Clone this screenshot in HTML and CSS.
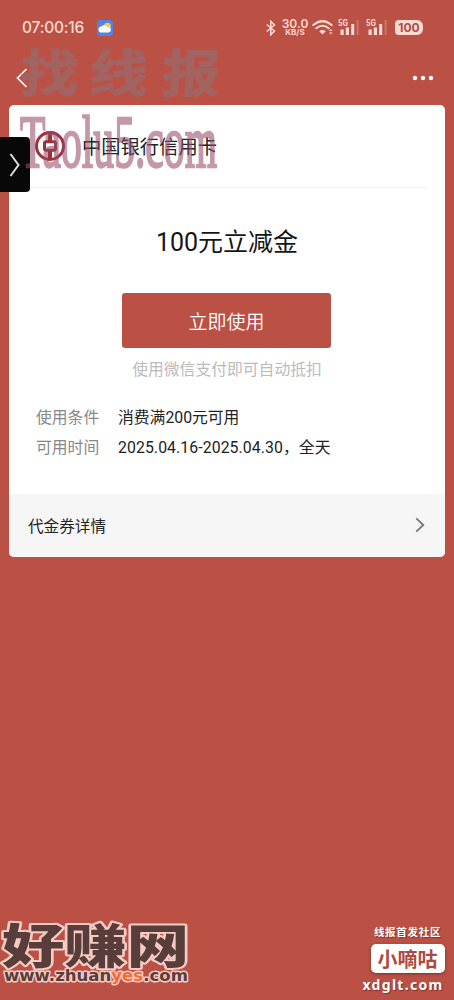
FILE: index.html
```html
<!DOCTYPE html>
<html lang="zh-CN">
<head>
<meta charset="UTF-8">
<meta name="viewport" content="width=device-width, initial-scale=1">
<title>100元立减金</title>
<link rel="stylesheet" href="styles.css">
</head>
<body>
<div class="screen">
  <header class="status">
    <span class="clock">07:00:16</span>
    <svg class="weather" width="16" height="16" viewBox="0 0 16 16"><rect width="16" height="16" rx="3.5" fill="#4f83e4"/><circle cx="10.5" cy="6" r="3.3" fill="#f6c469"/><path d="M4.7 12.5a3 3 0 0 1-.4-6 3.4 3.4 0 0 1 5.8.6 2.8 2.8 0 1 1 .9 5.4z" fill="#fff"/></svg>
    <div class="indicators">
      <svg width="10" height="16" viewBox="0 0 10 16" fill="none" stroke="#fcd9d1" stroke-width="1.6"><path d="M.8 4.5 8.4 11 4.8 14.7V1.3L8.4 5 .8 11.5"/></svg>
      <div class="speed"><span>30.0</span><small>KB/S</small></div>
      <svg class="wifi" width="22" height="17" viewBox="0 0 22 17" fill="none" stroke="#fcd9d1" stroke-width="2" stroke-linecap="round"><path d="M1.3 6.1q9.2-8 18.4 0M4.3 9.3q6.2-5.1 12.4 0"/><path d="M7.2 12.3q3.3-2.6 6.6 0L10.5 15.5z" fill="#fcd9d1" stroke="none"/><path d="m17 12 1.8-2.1 1.8 2.1zM17 13.5l1.8 2.1 1.8-2.1z" fill="#fcd9d1" stroke="none"/></svg>
      <div class="signal"><b>5G</b><svg width="20" height="16" viewBox="0 0 20 16" fill="#fcd9d1"><path d="M1.5 9.5h3.2V15H1.5zM6.8 7.5H10V15H6.8zM12.2 4h3V15h-3z"/><path d="M17.5 0h2.2v15h-2.2z" opacity=".25"/></svg></div>
      <div class="signal"><b>5G</b><svg width="20" height="16" viewBox="0 0 20 16" fill="#fcd9d1"><path d="M1.5 9.5h3.2V15H1.5zM6.8 7.5H10V15H6.8zM12.2 4h3V15h-3z"/><path d="M17.5 0h2.2v15h-2.2z" opacity=".25"/></svg></div>
      <span class="battery">100</span>
    </div>
  </header>
  <nav class="nav">
    <svg width="12" height="20" viewBox="0 0 12 20" fill="none" stroke="#fff" stroke-width="1.7"><path d="M10.5 1 1.5 10l9 9"/></svg>
    <svg width="22" height="6" viewBox="0 0 22 6" fill="#fff"><circle cx="3" cy="3" r="2.2"/><circle cx="11" cy="3" r="2.2"/><circle cx="19" cy="3" r="2.2"/></svg>
  </nav>
  <main class="card">
    <div class="merchant">
      <svg width="32" height="32" viewBox="0 0 32 32" fill="none" stroke="#9e303a"><circle cx="16" cy="16" r="13.5" stroke-width="3"/><rect x="10.5" y="11.7" width="11" height="8.6" rx="1.5" stroke-width="3"/><path d="M16 2v9M16 21v9" stroke-width="4"/></svg>
      <span>中国银行信用卡</span>
    </div>
    <h1>100元立减金</h1>
    <button class="use">立即使用</button>
    <p class="hint">使用微信支付即可自动抵扣</p>
    <dl class="terms">
      <dt>使用条件</dt><dd>消费满200元可用</dd>
      <dt>可用时间</dt><dd class="dates">2025.04.16-2025.04.30，全天</dd>
    </dl>
    <div class="details"><span>代金券详情</span><svg width="10" height="16" viewBox="0 0 10 16" fill="none" stroke="#777" stroke-width="1.8"><path d="m1.3 1.3 7 6.7-7 6.7"/></svg></div>
  </main>
  <div class="drawer"><svg width="12" height="26" viewBox="0 0 12 26" fill="none" stroke="#ddd" stroke-width="2"><path d="m1.5 2 8 11-8 11"/></svg></div>
  <svg class="mark-top" width="240" height="150" viewBox="0 0 240 150">
    <g class="brush" transform="translate(0 56) skewX(-3) scale(1.15 1)">
      <text x="17" y="0">找</text><text x="77" y="0">线</text><text x="140" y="0">报</text>
    </g>
    <text class="domain" transform="translate(20 131) scale(1 1.78)" x="0" y="0" textLength="197" lengthAdjust="spacingAndGlyphs">Taolu5.com</text>
  </svg>
  <svg class="mark-left" width="200" height="90" viewBox="0 0 200 90">
    <text class="outlined title" x="2" y="53" textLength="187" lengthAdjust="spacingAndGlyphs">好赚网</text>
    <text class="outlined site" x="4" y="71" textLength="184" lengthAdjust="spacingAndGlyphs">www.zhuan<tspan class="orange">yes</tspan>.com</text>
  </svg>
  <div class="mark-right">
    <span class="tagline">线报首发社区</span>
    <strong>小嘀咕</strong>
    <span class="address">xdglt.com</span>
  </div>
</div>
</body>
</html>
```
FILE: styles.css
```css
* { box-sizing: border-box; }
body { margin: 0; background: #bb5044; }
.screen { position: relative; width: 454px; height: 1000px; overflow: hidden; background: #bb5044; font-family: Roboto, "Noto Sans CJK SC", sans-serif; color: #222; }
.status { height: 54px; padding: 1px 31px 0 22px; display: flex; align-items: center; color: #fcd9d1; }
.clock { width: 63px; font: 500 15.5px/20px Inter, sans-serif; white-space: nowrap; letter-spacing: -.2px; }
.weather { margin-left: 12px; }
.indicators { margin-left: auto; display: flex; align-items: center; }
.speed { width: 26px; margin-left: 6px; display: flex; flex-direction: column; align-items: center; font: 600 12px/9px Inter, sans-serif; }
.speed small { font-size: 8px; line-height: 8px; font-weight: 700; }
.wifi { margin-left: 4px; }
.signal { position: relative; width: 20px; height: 16px; margin-left: 5px; }
.signal + .signal { margin-left: 8px; }
.signal b { position: absolute; left: -1px; top: -1px; font: 700 8px/8px Roboto, sans-serif; transform: scale(1, 1.2); transform-origin: left top; }
.signal svg { display: block; }
.battery { width: 28px; height: 15px; margin-left: 8px; border-radius: 4px 6px 6px 4px; background: #fcd9d1; color: #aa5048; font: 700 12px/15px Inter, sans-serif; text-align: center; }
.nav { height: 51px; padding: 0 20px 4px 16px; display: flex; align-items: center; justify-content: space-between; }
.card { width: 436px; height: 452px; margin-left: 9px; border-radius: 5px; overflow: hidden; background: #fff; display: flex; flex-direction: column; }
.merchant { height: 83px; margin: 0 18px; padding-left: 7px; display: flex; align-items: center; gap: 16px; border-bottom: 1px solid #f0f0f0; font-size: 19.3px; }
h1 { margin: 36px 0 0; height: 37px; line-height: 37px; text-align: center; font-size: 25px; font-weight: 400; color: #151515; }
.use { width: 209px; height: 55px; margin: 32px 0 0 113px; padding: 0; border: 0; border-radius: 3px; background: #bb5044; color: #fff; font: 350 19px/55px "Noto Sans CJK SC", sans-serif; }
.hint { margin: 9px 0 0; height: 26px; line-height: 26px; text-align: center; font-size: 15.8px; color: #bbb; }
.terms { margin: 20px 0 0 27px; display: grid; grid-template-columns: 82px 1fr; grid-auto-rows: 30px; font-size: 15.8px; line-height: 30px; }
.terms dt { color: #888; }
.terms dd { margin: 0; }
.terms .dates { letter-spacing: .09px; }
.details { height: 63px; margin-top: auto; padding: 0 20px 1px 19px; display: flex; align-items: center; justify-content: space-between; background: #f6f6f6; font-size: 15.6px; }
.drawer { position: absolute; left: 0; top: 137px; width: 30px; height: 55px; border-radius: 0 4px 4px 0; background: #080808; display: flex; align-items: center; justify-content: center; }
.mark-top { position: absolute; left: 0; top: 36px; }
.brush { font: 700 51px "Noto Sans CJK SC", sans-serif; fill: #a36361; stroke: #a36361; stroke-width: 1; stroke-linejoin: round; }
.domain { font: 400 42px "Liberation Serif", serif; fill: #974b67; stroke: #974b67; stroke-width: 1.3; opacity: .57; }
.mark-left { position: absolute; left: 0; top: 910px; }
.outlined { fill: #593d3b; stroke: #f4ccc4; stroke-width: 4px; stroke-linejoin: round; paint-order: stroke; }
.title { font: 900 47px "Noto Sans CJK SC", sans-serif; }
.site { font: 700 16px "DejaVu Sans", sans-serif; stroke-width: 3px; }
.orange { fill: #f36b32; }
.mark-right { position: absolute; left: 362px; top: 924px; width: 91px; display: flex; flex-direction: column; align-items: center; color: #fff; text-shadow: 1px 1px 1px #7b332c; }
.tagline { font: 700 10.5px/16px "Noto Sans CJK SC", sans-serif; letter-spacing: .7px; }
.mark-right strong { width: 74px; height: 29px; margin-top: 4px; border-radius: 5px; background: #fff; box-shadow: 0 1px 3px #71332d; color: #ad4a40; font: 700 20px/29px "Noto Sans CJK SC", sans-serif; text-align: center; text-shadow: none; }
.address { margin: 2px 9px 0 0; font: 700 14px/20px "Noto Sans", sans-serif; letter-spacing: 1.3px; }
```
